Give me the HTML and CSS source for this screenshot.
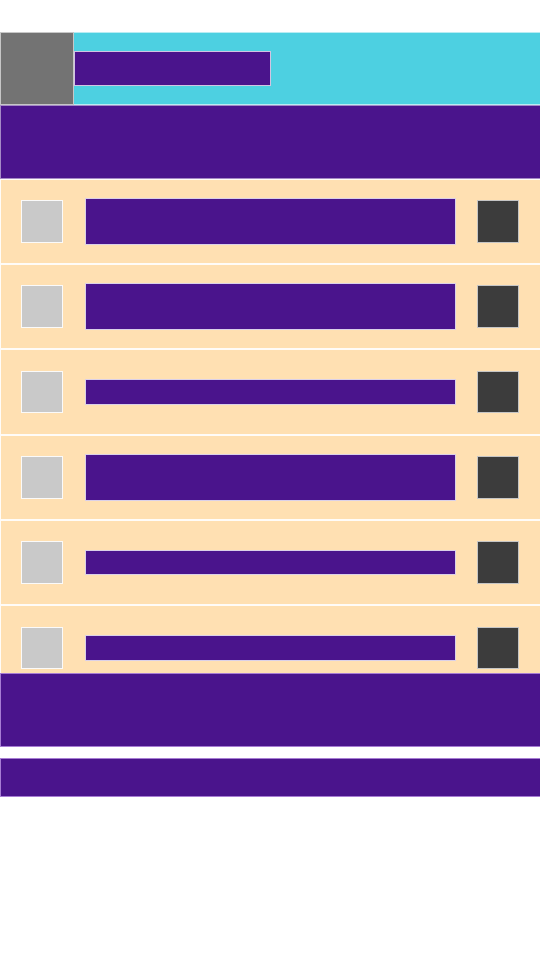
FILE: index.html
```html
<!DOCTYPE html>
<html lang="en">
<head>
<meta charset="utf-8">
<title>Layout</title>
<link rel="stylesheet" href="styles.css">
</head>
<body>
<div class="screen">
  <header class="header">
    <div class="avatar"></div>
    <div class="header-main">
      <div class="title"></div>
    </div>
  </header>
  <div class="band"></div>
  <div class="list">
    <div class="row">
      <div class="thumb"></div>
      <div class="text text-tall"></div>
      <div class="action"></div>
    </div>
    <div class="row">
      <div class="thumb"></div>
      <div class="text text-tall"></div>
      <div class="action"></div>
    </div>
    <div class="row">
      <div class="thumb"></div>
      <div class="text text-short"></div>
      <div class="action"></div>
    </div>
    <div class="row">
      <div class="thumb"></div>
      <div class="text text-tall"></div>
      <div class="action"></div>
    </div>
    <div class="row">
      <div class="thumb"></div>
      <div class="text text-short"></div>
      <div class="action"></div>
    </div>
    <div class="row">
      <div class="thumb"></div>
      <div class="text text-short"></div>
      <div class="action"></div>
    </div>
  </div>
  <div class="footer"></div>
  <div class="bar"></div>
</div>
</body>
</html>
```

FILE: styles.css
```css
* {
  box-sizing: border-box;
}

html, body {
  margin: 0;
  padding: 0;
  background: #ffffff;
  font-family: "Liberation Sans", Arial, sans-serif;
}

.screen {
  width: 540px;
  padding-top: 32px;
}

.header {
  display: flex;
  height: 73.33px;
}

.avatar {
  width: 73.5px;
  flex: 0 0 73.5px;
  background: #737373;
  border: 1px solid rgba(255, 255, 255, 0.6);
}

.header-main {
  flex: 1;
  display: flex;
  align-items: center;
  background: #4dd0e1;
  border: 1px solid rgba(255, 255, 255, 0.6);
  border-left: none;
  border-right: none;
}

.title {
  width: 197.5px;
  height: 35.5px;
  background: #4a148c;
  border: 1px solid rgba(255, 255, 255, 0.75);
}

.band {
  height: 73.33px;
  background: #4a148c;
  border: 1px solid rgba(255, 255, 255, 0.5);
  border-right: none;
}

.list {
  height: 494.67px;
  overflow: hidden;
  background: #ffe0b2;
}

.row {
  display: flex;
  align-items: center;
  height: 85.33px;
  padding: 0 21px 0 20px;
  background: #ffe0b2;
  border: 1px solid rgba(255, 255, 255, 0.9);
  border-right: none;
}

.thumb {
  width: 42px;
  height: 42.5px;
  flex: 0 0 42px;
  background: #c9c9c9;
  border: 1px solid rgba(255, 255, 255, 0.9);
}

.text {
  flex: 1;
  margin: 0 21px 0 22px;
  background: #4a148c;
  border: 1px solid rgba(255, 255, 255, 0.8);
}

.text-tall {
  height: 46.5px;
}

.text-short {
  height: 25.5px;
}

.action {
  width: 42px;
  height: 42.5px;
  flex: 0 0 42px;
  background: #3c3c3c;
  border: 1px solid rgba(255, 255, 255, 0.7);
}

.footer {
  height: 73.33px;
  background: #4a148c;
  border: 1px solid rgba(190, 150, 230, 0.8);
  border-right: none;
}

.bar {
  margin-top: 11.67px;
  height: 39px;
  background: #4a148c;
  border: 1px solid rgba(190, 150, 230, 0.8);
  border-right: none;
}
```
